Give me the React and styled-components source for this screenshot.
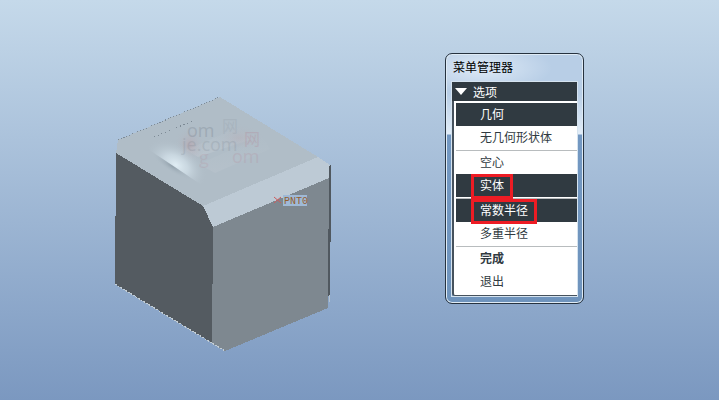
import React, { useState } from "react";
import styled, { createGlobalStyle, css } from "styled-components";

const groups = [
  ["几何", "无几何形状体"],
  ["空心", "实体"],
  ["常数半径", "多重半径"],
  ["完成", "退出"],
];

const marked = ["实体", "常数半径"];

function App() {
  const [picked, setPicked] = useState(["几何", "实体", "常数半径", null]);

  const pick = (index, label) => {
    if (index === groups.length - 1) return;
    setPicked(picked.map((value, i) => (i === index ? label : value)));
  };

  return (
    <>
      <GlobalStyle />
      <Viewport>
        <ModelArea>
          <Model />
        </ModelArea>
        <MenuManager>
          <Title>菜单管理器</Title>
          <Menu>
            <MenuHeader>
              <svg width="12" height="7" viewBox="0 0 12 7" aria-hidden="true">
                <path d="M0 0h12L6 7z" fill="#fff" />
              </svg>
              选项
            </MenuHeader>
            <MenuBody>
              {groups.map((items, index) => (
                <Group key={items[0]}>
                  {items.map((label) => (
                    <Item
                      key={label}
                      type="button"
                      $active={picked[index] === label}
                      $bold={label === "完成"}
                      onClick={() => pick(index, label)}
                    >
                      <Label>
                        {label}
                        {marked.includes(label) && <Mark />}
                      </Label>
                    </Item>
                  ))}
                </Group>
              ))}
            </MenuBody>
          </Menu>
        </MenuManager>
      </Viewport>
    </>
  );
}

function Model() {
  return (
    <ModelSvg viewBox="115 97 217 255" role="img" aria-label="PNT0">
      <defs>
        <radialGradient id="shine">
          <stop offset="0" stopColor="#e0edf4" />
          <stop offset="0.4" stopColor="#cfdde6" stopOpacity="0.8" />
          <stop offset="1" stopColor="#b0bec8" stopOpacity="0" />
        </radialGradient>
        <radialGradient id="shade">
          <stop offset="0" stopColor="#8796a1" stopOpacity="0.7" />
          <stop offset="1" stopColor="#b0bec8" stopOpacity="0" />
        </radialGradient>
        <radialGradient id="blush">
          <stop offset="0" stopColor="#b9a2ab" stopOpacity="0.6" />
          <stop offset="1" stopColor="#b0bec8" stopOpacity="0" />
        </radialGradient>
        <linearGradient id="fold" x1="0" y1="0" x2="0" y2="1">
          <stop offset="0" stopColor="#bac7cf" stopOpacity="0" />
          <stop offset="1" stopColor="#bdc6cf" stopOpacity="0.8" />
        </linearGradient>
        <clipPath id="above">
          <path d="M130 137L160 110L230 150L215 194Z" />
        </clipPath>
        <clipPath id="below">
          <path d="M130 137L215 194L190 199L130 160Z" />
        </clipPath>
      </defs>
      <g shapeRendering="crispEdges">
        <path d="M118 140L220 97L318 157L203 206L116 153Z" fill="#b0bdc7" />
        <path d="M203 206L318 157L330 165L329 178L213 227Z" fill="#bdcad5" />
        <path d="M116 153L203 206L213 227L212 343L115 284Z" fill="#545b61" />
        <path d="M213 227L329 178L328 308L225 351L212 343Z" fill="#7e8890" />
        <path d="M329 166L331 165V190L330 296H328Z" fill="#50585f" />
        <path d="M329 295v7" stroke="#b6c2cc" />
        <path d="M115 284L225 351" stroke="#c3cdd3" strokeDasharray="2 1" fill="none" />
        <path d="M118 140L220 97" stroke="#7d8b98" strokeDasharray="1 2" fill="none" />
        <path d="M154 137L195 120" stroke="#7d8a95" strokeDasharray="1 3" fill="none" />
      </g>
      <path d="M186 150L239 127L252 139L198 157Z" fill="url(#fold)" />
      <path d="M199 164L262 136L270 149L215 173Z" fill="url(#fold)" opacity="0.5" />
      <ellipse cx="190" cy="145" rx="16" ry="20" fill="url(#blush)" />
      <ellipse cx="239" cy="138" rx="26" ry="15" fill="url(#blush)" opacity="0.5" />
      <g clipPath="url(#above)">
        <ellipse cx="176" cy="165" rx="34" ry="22" transform="rotate(33 176 165)" fill="url(#shine)" />
      </g>
      <g clipPath="url(#below)">
        <ellipse cx="172" cy="166" rx="24" ry="6" transform="rotate(33 172 166)" fill="url(#shade)" />
      </g>
      <Watermark>
        <text x="187" y="137" opacity="0.28">om</text>
        <text x="182" y="151" opacity="0.18">je.com</text>
        <text x="222" y="132" fontSize="16" opacity="0.12">网</text>
        <Pink>
          <text x="199" y="164" opacity="0.12">g</text>
          <text x="232" y="163" opacity="0.14">om</text>
          <text x="244" y="145" fontSize="16" opacity="0.18">网</text>
        </Pink>
      </Watermark>
      <path d="M274 197l7 6M281 197l-7 6" stroke="#cc5c5e" />
      <rect x="283" y="195" width="24" height="11" fill="#9fb9d6" />
      <PointName x="284" y="204">PNT0</PointName>
    </ModelSvg>
  );
}

export default App;

const GlobalStyle = createGlobalStyle`
  * {
    box-sizing: border-box;
  }
  body {
    margin: 0;
    font-family: "Liberation Sans", "Noto Sans CJK SC", sans-serif;
    font-size: 12px;
  }
`;

const Viewport = styled.main`
  min-height: 100vh;
  display: grid;
  grid-template-columns: 13fr 8fr;
  align-items: start;
  background: linear-gradient(#c5d9ea, #7b98c0);
`;

const ModelArea = styled.div`
  padding: 97px 0 48px 16vw;
`;

const ModelSvg = styled.svg`
  display: block;
  width: 217px;
  height: 255px;
`;

const Watermark = styled.g`
  font-family: "Open Sans", "Noto Sans CJK SC", sans-serif;
  font-size: 18px;
  fill: #707a86;
`;

const Pink = styled.g`
  fill: #b4697c;
`;

const PointName = styled.text`
  font-family: "Liberation Mono", monospace;
  font-size: 10px;
  fill: #94602f;
`;

const MenuManager = styled.section`
  justify-self: start;
  width: 139px;
  margin-top: 53px;
  padding: 4px 5px 6px;
  border: 1px solid #26323f;
  border-radius: 7px;
  background: radial-gradient(ellipse 70px 24px at 36px 14px, #d6e4f3 20%, transparent),
    linear-gradient(#b8cee6 40px, #e2edf8 80px, #7398c2 81px, #6f94bd);
  box-shadow: inset 0 0 0 1px #dfebf5;
`;

const Title = styled.h2`
  margin: 0;
  padding: 0 2px;
  font-size: 12px;
  font-weight: 400;
  line-height: 20px;
  color: #000;
`;

const Menu = styled.div`
  margin-top: 3px;
  border: 1px solid #d5e3ef;
`;

const MenuHeader = styled.div`
  display: flex;
  align-items: center;
  gap: 6px;
  height: 19px;
  padding-left: 3px;
  background: #303a41;
  color: #fff;
`;

const MenuBody = styled.div`
  padding: 2px 0 2px 2px;
  border-left: 2px solid #46525d;
  border-bottom: 1px solid #46525d;
  border-bottom-left-radius: 3px;
  background: #fff;
`;

const Group = styled.div`
  & + & {
    border-top: 1px solid #b8bcbe;
    margin-top: 1px;
  }
`;

const Item = styled.button`
  display: flex;
  align-items: center;
  width: 100%;
  height: 23px;
  padding: 0 0 0 24px;
  border: none;
  background: #fff;
  color: #303a41;
  font-family: inherit;
  font-size: 12px;
  line-height: 18px;
  cursor: pointer;
  ${({ $bold }) => $bold && "font-weight: 700;"}
  ${({ $active }) =>
    $active &&
    css`
      background: #303a41;
      color: #fff;
    `}
`;

const Label = styled.span`
  position: relative;
`;

/* red frame drawn over the label */
const Mark = styled.span`
  position: absolute;
  z-index: 1;
  inset: -3px -9px -4px;
  border: 3px solid #ed1c24;
  pointer-events: none;
`;
